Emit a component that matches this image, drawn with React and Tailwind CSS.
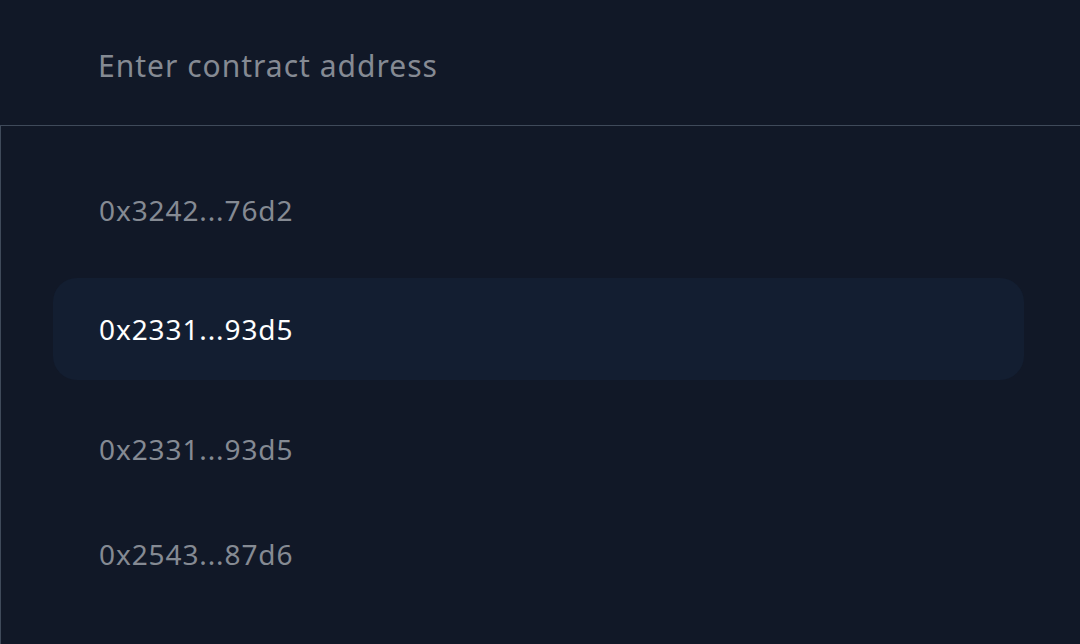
import React from "react";

const items = [
  { label: "0x3242...76d2", active: false, mt: "mt-[33px]" },
  { label: "0x2331...93d5", active: true, mt: "mt-[17px]" },
  { label: "0x2331...93d5", active: false, mt: "mt-[18px]" },
  { label: "0x2543...87d6", active: false, mt: "mt-[3px]" },
];

const App = () => {
  return (
    <div className="w-[1080px] h-[644px] overflow-hidden bg-[#111827] text-[28px]" style={{ fontFamily: "'Noto Sans', 'Open Sans', sans-serif" }}>
      <div className="h-[125px] flex items-center pl-[98px] pt-[5px]">
        <input
          className="w-full bg-transparent outline-none text-[30px] tracking-[1px] text-[#e5e7eb] placeholder:text-[#858a93]"
          placeholder="Enter contract address"
        />
      </div>

      <div className="border-t border-l border-[#3f4a5a] h-[519px] pr-[56px] pl-[52px]">
        {items.map((item, i) => (
          <div
            key={i}
            className={`${item.mt} h-[102px] flex items-center pl-[46px] rounded-[24px] tracking-[0.9px] ${
              item.active ? "bg-[#131e31] text-white" : "text-[#858a93]"
            }`}
          >
            {item.label}
          </div>
        ))}
      </div>
    </div>
  );
};

export default App;
